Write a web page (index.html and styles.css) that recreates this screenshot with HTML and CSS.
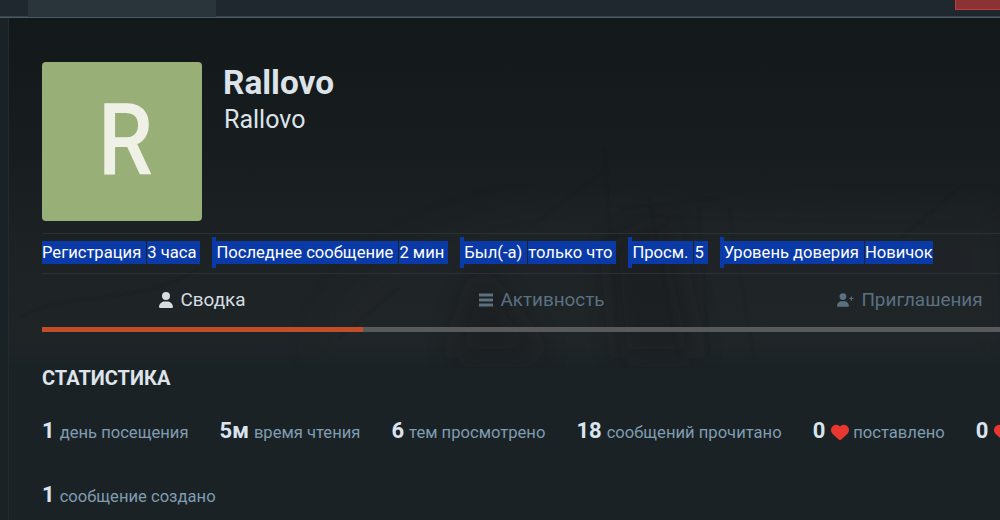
FILE: index.html
```html
<!DOCTYPE html>
<html lang="ru">
<head>
<meta charset="utf-8">
<title>Rallovo</title>
<link rel="stylesheet" href="styles.css">
</head>
<body>
<header class="topbar">
  <div class="topbar-gap"></div>
  <div class="topbar-tab"></div>
  <div class="topbar-fill"></div>
  <div class="topbar-alert"></div>
</header>
<div class="page">
  <div class="rail"></div>
  <main class="content">
    <svg class="texture" width="991" height="350" viewBox="0 0 991 350" aria-hidden="true">
      <defs>
        <filter id="soft"><feGaussianBlur stdDeviation="14"/></filter>
        <filter id="softer"><feGaussianBlur stdDeviation="1.200"/></filter>
      </defs>
      <g filter="url(#soft)" fill="#262b2e" opacity=".22">
        <path d="M300 340 C330 240 420 200 560 180 L991 190 L991 340 Z"/>
      </g>
      <g filter="url(#soft)" fill="#121618" opacity=".32">
        <path d="M440 340 L470 250 L540 340 Z"/>
        <path d="M600 230 L660 200 L690 340 L610 340 Z"/>
      </g>
      <g filter="url(#softer)" stroke="#111517" fill="none" stroke-width="1" opacity=".22">
        <path d="M595 130 L610 340 M640 180 L670 340 M520 210 L600 150 M610 190 L710 180"/>
        <path d="M690 190 L700 340 M720 190 L745 340 M560 240 C600 210 640 220 660 205"/>
        <path d="M10 300 C60 270 130 290 190 250 M330 320 L390 270 M880 230 L950 170"/>
      </g>
    </svg>
    <section class="profile">
      <div class="avatar"><span class="avatar-letter">R</span></div>
      <div class="names">
        <h1 class="name">Rallovo</h1>
        <h2 class="username">Rallovo</h2>
      </div>
    </section>
    <ul class="meta">
      <li class="meta-item meta-first"><span class="mark mark-label">Регистрация</span><span class="mark mark-value">3 часа</span></li>
      <li class="meta-item"><span class="mark mark-label">Последнее сообщение</span><span class="mark mark-value">2 мин</span></li>
      <li class="meta-item"><span class="mark mark-label">Был(-а)</span><span class="mark mark-value">только что</span></li>
      <li class="meta-item"><span class="mark mark-label">Просм.</span><span class="mark mark-value">5</span></li>
      <li class="meta-item"><span class="mark mark-label">Уровень доверия</span><span class="mark mark-value">Новичок</span></li>
    </ul>
    <nav class="tabs">
      <a class="tab tab-active">
        <svg class="tab-icon" width="14" height="16" viewBox="0 0 448 512"><path fill="currentColor" d="M224 256A128 128 0 1 0 224 0a128 128 0 1 0 0 256zm-45.700 48C79.800 304 0 383.800 0 482.300 0 498.700 13.300 512 29.700 512h388.600c16.400 0 29.700-13.300 29.700-29.700C448 383.800 368.200 304 269.700 304h-91.400z"/></svg>
        Сводка
      </a>
      <a class="tab">
        <svg class="tab-icon" width="14" height="16" viewBox="0 0 14 16"><path fill="currentColor" d="M0 1.500h14v3H0zM0 6.500h14v3H0zM0 11.500h14v3H0z"/></svg>
        Активность
      </a>
      <a class="tab">
        <svg class="tab-icon" width="17" height="14" viewBox="0 0 640 512"><path fill="currentColor" d="M224 256A128 128 0 1 0 224 0a128 128 0 1 0 0 256zm-45.700 48C79.800 304 0 383.800 0 482.300 0 498.700 13.300 512 29.700 512h388.600c16.400 0 29.700-13.300 29.700-29.700C448 383.800 368.200 304 269.700 304h-91.400zM520 120h40v60h60v40h-60v60h-40v-60h-60v-40h60z"/></svg>
        Приглашения
      </a>
    </nav>
    <div class="tab-rule"><div class="tab-rule-on"></div></div>
    <section class="stats">
      <h3 class="stats-title">Статистика</h3>
      <ul class="stats-list">
        <li class="stat"><b class="num">1</b><span>день посещения</span></li>
        <li class="stat"><b class="num">5м</b><span>время чтения</span></li>
        <li class="stat"><b class="num">6</b><span>тем просмотрено</span></li>
        <li class="stat"><b class="num">18</b><span>сообщений прочитано</span></li>
        <li class="stat"><b class="num">0</b><svg class="heart" width="18" height="17" viewBox="0 30 512 460"><path fill="#e8372f" d="M47.600 300.400L228.300 469.100c7.500 7 17.400 10.900 27.700 10.900s20.200-3.900 27.700-10.900L464.400 300.400c30.400-28.300 47.600-68 47.600-109.500v-5.800c0-69.900-50.500-129.500-119.400-141C347 36.500 300.600 51.400 268 84L256 96 244 84c-32.600-32.600-79-47.500-124.600-39.900C50.500 55.600 0 115.200 0 185.100v5.800c0 41.500 17.200 81.200 47.600 109.500z"/></svg><span>поставлено</span></li>
        <li class="stat"><b class="num">0</b><svg class="heart" width="18" height="17" viewBox="0 30 512 460"><path fill="#e8372f" d="M47.600 300.400L228.300 469.100c7.500 7 17.400 10.900 27.700 10.900s20.200-3.900 27.700-10.900L464.400 300.400c30.400-28.300 47.600-68 47.600-109.500v-5.800c0-69.900-50.500-129.500-119.400-141C347 36.500 300.600 51.400 268 84L256 96 244 84c-32.600-32.600-79-47.500-124.600-39.900C50.500 55.600 0 115.200 0 185.100v5.800c0 41.500 17.200 81.200 47.600 109.500z"/></svg><span>получено</span></li>
        <li class="stat"><b class="num">1</b><span>сообщение создано</span></li>
      </ul>
    </section>
  </main>
</div>
</body>
</html>
```

FILE: styles.css
```css
* { box-sizing: border-box; }
html, body { margin: 0; height: 100%; overflow: hidden; }
body {
  width: 1000px;
  height: 520px;
  background: #1c2226;
  font-family: Roboto, "Noto Sans", sans-serif;
  color: #dde4ea;
}
ul { list-style: none; margin: 0; padding: 0; }
h1, h2, h3 { margin: 0; }

.topbar {
  display: flex;
  height: 18px;
  background: #1f282e;
  border-bottom: 1px solid #4a5a62;
  box-shadow: inset 0 -1px 0 #36444b;
}
.topbar-gap { width: 28px; flex: none; }
.topbar-tab { width: 188px; flex: none; background: #29343b; }
.topbar-fill { flex: 1; }
.topbar-alert {
  width: 45px;
  height: 10px;
  flex: none;
  background: #8a3234;
  border: 1px solid #c23c3c;
  border-top: 0;
  border-right: 0;
}

.page { display: flex; height: 502px; }
.rail { width: 9px; flex: none; background: #1a2226; border-right: 1px solid #222b30; }
.content {
  position: relative;
  flex: none;
  width: 1200px;
  padding: 44px 0 0 33px;
  background: linear-gradient(180deg, #13181b 0, #171c1f 130px, #1d2225 240px, #1f2427 320px, #1b2226 350px);
}
.texture { position: absolute; left: 0; top: 0; }
.profile, .meta, .tabs, .tab-rule, .stats { position: relative; }

.profile { display: flex; height: 159px; }
.avatar {
  width: 160px;
  height: 159px;
  flex: none;
  border-radius: 4px;
  background: #99af78;
  color: #f0f1e6;
  font-size: 100px;
  font-weight: 500;
  line-height: 159px;
  text-align: center;
}
.avatar-letter {
  display: inline-block;
  transform: translate(3px, -1px) scaleX(.875);
}
.names { margin-left: 22px; padding-top: 1px; }
.name { font-size: 33.4px; font-weight: 700; line-height: 38px; margin: 1px 0 0 -1px; color: #dce4ea; }
.username { font-size: 25px; font-weight: 400; line-height: 36px; margin-top: 0; color: #dce4ea; }

.meta {
  display: flex;
  width: 958px;
  height: 41px;
  margin-top: 12px;
  padding-top: 7px;
  border-top: 1px solid #283137;
  border-bottom: 1px solid #283137;
  font-size: 16.6px;
  color: #fff;
}
.meta-item {
  display: flex;
  height: 23px;
  margin-left: 12px;
  position: relative;
  padding-left: 4px;
}
.meta-item::before {
  content: "";
  position: absolute;
  left: 0;
  top: -4px;
  width: 4px;
  height: 31px;
  background: #0a39a8;
}
.meta-first { margin-left: 0; padding-left: 0; }
.meta-first::before { display: none; }
.mark { background: #0a39a8; line-height: 23px; white-space: nowrap; }
.mark-label { padding-right: 5px; margin-right: 1px; }
.mark-value { padding-right: 4px; }
.meta-item:last-child .mark-value { padding-right: 0; }

.tabs {
  display: grid;
  grid-template-columns: 321px 358px 378px;
  width: 1057px;
  height: 53px;
  padding-bottom: 2px;
  font-size: 18.9px;
}
.tab {
  display: flex;
  align-items: center;
  justify-content: center;
  gap: 7px;
  color: #5b7080;
}
.tab-active { color: #d5dde3; }
.tab-icon { flex: none; }
.tab-rule { width: 1057px; height: 5px; background: #595959; }
.tab-rule-on { width: 321px; height: 5px; background: #c24d26; }

.stats { padding-top: 34px; }
.stats-title {
  font-size: 20px;
  font-weight: 700;
  line-height: 24px;
  text-transform: uppercase;
  color: #dde4ea;
}
.stats-list {
  display: flex;
  flex-wrap: wrap;
  column-gap: 31px;
  row-gap: 36px;
  width: 1100px;
  margin-top: 28px;
  font-size: 16.6px;
  line-height: 26px;
  color: #7f9cb0;
}
.stat { white-space: nowrap; display: flex; align-items: baseline; gap: 5px; }
.num { font-size: 22px; font-weight: 700; color: #d9e4ee; }
.heart { align-self: center; margin: 0 -1px 0 1px; }
```
